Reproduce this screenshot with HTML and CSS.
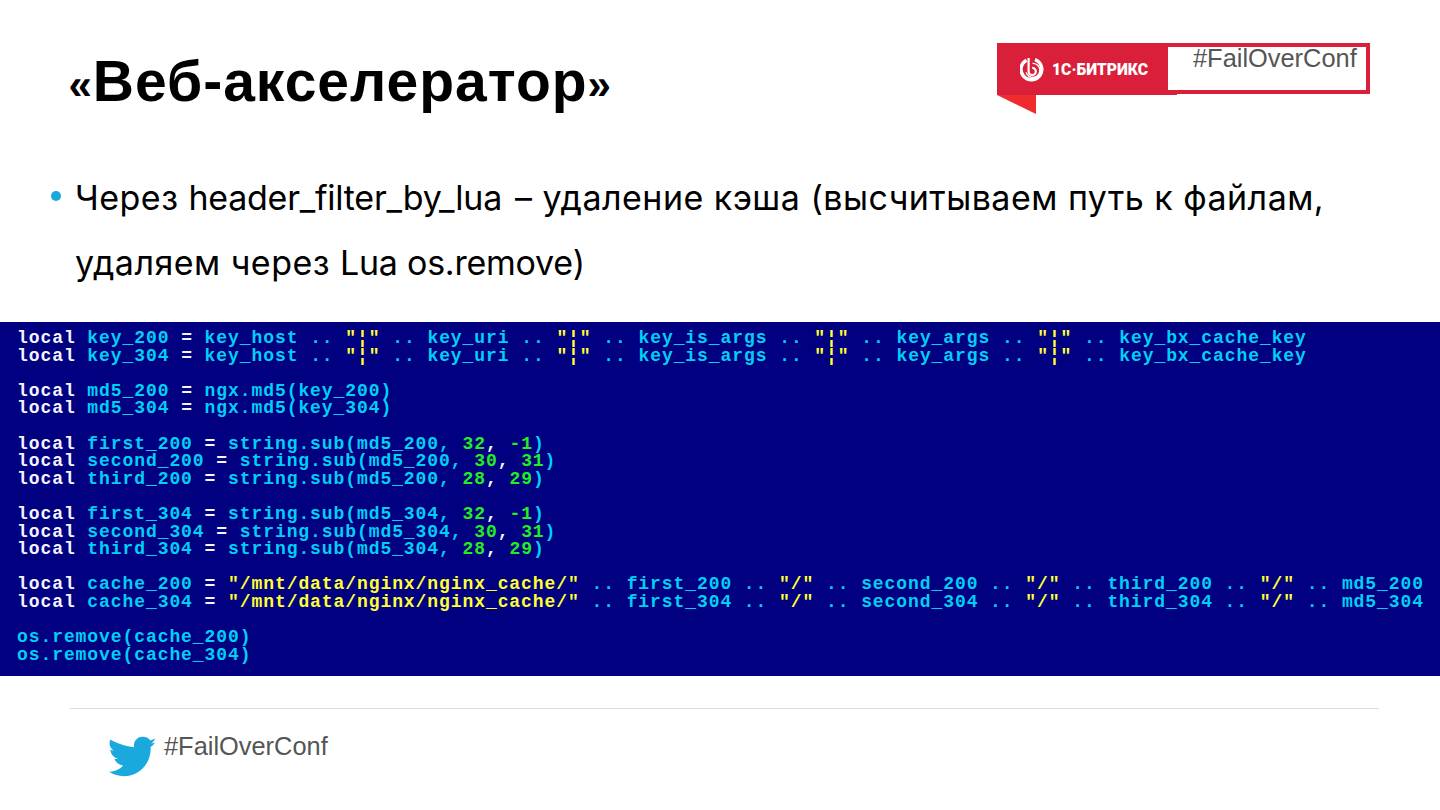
FILE: index.html
```html
<!DOCTYPE html>
<html lang="ru">
<head>
<meta charset="utf-8">
<title>Веб-акселератор</title>
<link rel="stylesheet" href="styles.css">
</head>
<body>
<div class="slide">
  <header class="head">
    <h1 class="title"><span class="quote">«</span><span>Веб-акселератор</span><span class="quote">»</span></h1>
    <div class="brand">
      <div class="brand-red">
        <svg class="brand-icon" viewBox="0 0 24 25" width="24" height="25">
          <path d="M6.5 3.2A10.4 10.4 0 1 0 15 2.6" fill="none" stroke="#fff" stroke-width="3.4"/>
          <path d="M8.6 1V14.5a3.6 3.6 0 1 0 3.6-3.6" fill="none" stroke="#fff" stroke-width="2.2"/>
          <path d="M12.5 6.4a7 7 0 1 1-6.4 9" fill="none" stroke="#fff" stroke-width="1.4"/>
        </svg>
        <span class="brand-name">1С·БИТРИКС</span>
      </div>
      <div class="brand-frame"><span class="tag">#FailOverConf</span></div>
      <svg class="brand-tail" viewBox="0 0 39 19" width="39" height="19"><path d="M0 0H39V19Z" fill="#ef2b2d"/></svg>
    </div>
  </header>
  <ul class="points">
    <li class="point"><span>Через </span><span class="lat lat-gap">header_filter_by_lua</span><span> – удаление кэша (высчитываем путь к файлам, </span><span>удаляем через </span><span class="lat">Lua os.remove)</span></li>
  </ul>
  <pre class="code"><span class="w">local</span> <span class="c">key_200</span> <span class="w">=</span> <span class="c">key_host</span> <span class="c">..</span> <span class="y">"¦"</span> <span class="c">..</span> <span class="c">key_uri</span> <span class="c">..</span> <span class="y">"¦"</span> <span class="c">..</span> <span class="c">key_is_args</span> <span class="c">..</span> <span class="y">"¦"</span> <span class="c">..</span> <span class="c">key_args</span> <span class="c">..</span> <span class="y">"¦"</span> <span class="c">..</span> <span class="c">key_bx_cache_key</span>
<span class="w">local</span> <span class="c">key_304</span> <span class="w">=</span> <span class="c">key_host</span> <span class="c">..</span> <span class="y">"¦"</span> <span class="c">..</span> <span class="c">key_uri</span> <span class="c">..</span> <span class="y">"¦"</span> <span class="c">..</span> <span class="c">key_is_args</span> <span class="c">..</span> <span class="y">"¦"</span> <span class="c">..</span> <span class="c">key_args</span> <span class="c">..</span> <span class="y">"¦"</span> <span class="c">..</span> <span class="c">key_bx_cache_key</span>

<span class="w">local</span> <span class="c">md5_200</span> <span class="w">=</span> <span class="c">ngx.md5(key_200)</span>
<span class="w">local</span> <span class="c">md5_304</span> <span class="w">=</span> <span class="c">ngx.md5(key_304)</span>

<span class="w">local</span> <span class="c">first_200</span> <span class="w">=</span> <span class="c">string.sub(md5_200,</span> <span class="g">32</span><span class="w">,</span> <span class="g">-1</span><span class="c">)</span>
<span class="w">local</span> <span class="c">second_200</span> <span class="w">=</span> <span class="c">string.sub(md5_200,</span> <span class="g">30</span><span class="w">,</span> <span class="g">31</span><span class="c">)</span>
<span class="w">local</span> <span class="c">third_200</span> <span class="w">=</span> <span class="c">string.sub(md5_200,</span> <span class="g">28</span><span class="w">,</span> <span class="g">29</span><span class="c">)</span>

<span class="w">local</span> <span class="c">first_304</span> <span class="w">=</span> <span class="c">string.sub(md5_304,</span> <span class="g">32</span><span class="w">,</span> <span class="g">-1</span><span class="c">)</span>
<span class="w">local</span> <span class="c">second_304</span> <span class="w">=</span> <span class="c">string.sub(md5_304,</span> <span class="g">30</span><span class="w">,</span> <span class="g">31</span><span class="c">)</span>
<span class="w">local</span> <span class="c">third_304</span> <span class="w">=</span> <span class="c">string.sub(md5_304,</span> <span class="g">28</span><span class="w">,</span> <span class="g">29</span><span class="c">)</span>

<span class="w">local</span> <span class="c">cache_200</span> <span class="w">=</span> <span class="y">"/mnt/data/nginx/nginx_cache/"</span> <span class="c">..</span> <span class="c">first_200</span> <span class="c">..</span> <span class="y">"/"</span> <span class="c">..</span> <span class="c">second_200</span> <span class="c">..</span> <span class="y">"/"</span> <span class="c">..</span> <span class="c">third_200</span> <span class="c">..</span> <span class="y">"/"</span> <span class="c">..</span> <span class="c">md5_200</span>
<span class="w">local</span> <span class="c">cache_304</span> <span class="w">=</span> <span class="y">"/mnt/data/nginx/nginx_cache/"</span> <span class="c">..</span> <span class="c">first_304</span> <span class="c">..</span> <span class="y">"/"</span> <span class="c">..</span> <span class="c">second_304</span> <span class="c">..</span> <span class="y">"/"</span> <span class="c">..</span> <span class="c">third_304</span> <span class="c">..</span> <span class="y">"/"</span> <span class="c">..</span> <span class="c">md5_304</span>

<span class="c">os.remove(cache_200)</span>
<span class="c">os.remove(cache_304)</span></pre>
  <footer class="foot">
    <svg class="bird" viewBox="148 108 141 122" width="47" height="41"><path d="M287 115L272 121C268 113 256 109 247 110C232 111 221 124 223 141C199 139 172 130 152 118C147 130 150 143 162 151C158 151 155 150 152 148C153 162 162 172 175 176C171 177 167 177 164 176C168 187 178 194 190 196C180 208 164 214 148 215C162 224 178 228 192 228C240 228 275 190 273 140C279 137 284 131 286 127L274 130C280 126 285 120 287 115Z" fill="#1aa9dd"/></svg>
    <span class="tag">#FailOverConf</span>
  </footer>
</div>
</body>
</html>
```
FILE: styles.css
```css
* { box-sizing: border-box; }
html, body { margin: 0; padding: 0; background: #fff; }
.slide { width: 1440px; height: 810px; overflow: hidden; display: flex; flex-direction: column; font-family: "Liberation Sans", Arial, sans-serif; }
.head { display: flex; justify-content: space-between; align-items: flex-start; height: 157px; padding: 43px 70px 0 68.5px; }
.title { margin: 2px 0 0; font-family: "Liberation Sans", Arial, sans-serif; font-weight: 700; font-size: 57px; line-height: 72px; letter-spacing: 1px; color: #000; white-space: nowrap; }
.quote { font-size: 42px; vertical-align: 2px; line-height: 1; }
.brand { position: relative; display: flex; width: 373px; height: 51px; }
.brand::after { content: ""; position: absolute; left: 171px; top: 51px; width: 9px; height: 1px; background: #d91f3a; }
.brand-red { display: flex; align-items: center; gap: 8px; width: 171px; height: 52px; padding: 0 0 0 23px; background: #d91f3a; }
.brand-icon { flex: none; }
.brand-name { font-family: Roboto, sans-serif; font-weight: 900; font-size: 15.7px; color: #fff; white-space: nowrap; }
.brand-frame { flex: 1; height: 51px; border: 4px solid #d91f3a; border-left: 0; padding: 0 0 0 25px; line-height: 22px; }
.brand-tail { position: absolute; left: 0; top: 52px; }
.tag { font-family: "Liberation Sans", sans-serif; font-size: 25.4px; color: #555; white-space: nowrap; }
.points { list-style: none; margin: 0; padding: 8px 0 0 75px; height: 165px; }
.point { position: relative; width: 1270px; font-family: Inter, Roboto, sans-serif; font-size: 34px; letter-spacing: 0.47px; line-height: 65px; color: #000; }
.lat { letter-spacing: -0.25px; }
.lat-gap { margin-right: 3px; }
.point::before { content: ""; position: absolute; left: -24px; top: 26px; width: 10px; height: 10px; border-radius: 50%; background: #1aa9dd; }
.code { flex: none; margin: 0; height: 354px; padding: 8px 0 0 17px; background: #000080; font-family: "Liberation Mono", monospace; font-weight: 700; font-size: 18px; letter-spacing: 0.92px; line-height: 17.6px; white-space: pre; overflow: hidden; }
.w { color: #f4f4ff; }
.c { color: #00d0f5; }
.y { color: #ffff33; }
.g { color: #22ee22; }
.foot { margin: 32px 61px 0 70px; border-top: 1px solid #ddd; padding: 20px 0 0 39px; display: flex; align-items: flex-start; gap: 8px; }
.bird { margin-top: 7px; }
.foot .tag { line-height: 34px; }
```
